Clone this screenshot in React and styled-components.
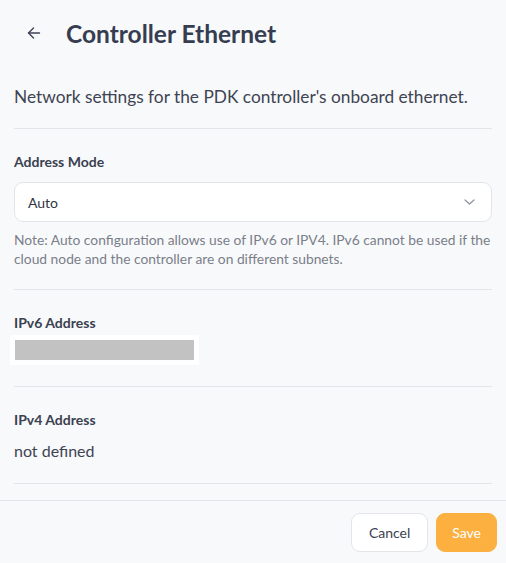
import styled, { createGlobalStyle } from 'styled-components'

const GlobalStyle = createGlobalStyle`
    html, body {
        margin: 0;
        padding: 0;
        background: #f8f9fb;
    }
    body {
        font-family: Lato, "Open Sans", sans-serif;
        color: #3a4150;
    }
`

function ArrowLeft() {
    return (
        <svg width="14" height="14" viewBox="0 0 14 14" fill="none" stroke="#3d4456" strokeWidth="1.4" strokeLinecap="round" strokeLinejoin="round">
            <path d="M12.5 7H1.5" />
            <path d="M6.5 2L1.5 7l5 5" />
        </svg>
    )
}

function Chevron() {
    return (
        <svg width="11" height="6" viewBox="0 0 11 6" fill="none" stroke="#8a909c" strokeWidth="1.2" strokeLinecap="round" strokeLinejoin="round">
            <path d="M1 1l4.5 4L10 1" />
        </svg>
    )
}

export default function App() {
    return (
        <Page>
            <GlobalStyle />
            <Body>
                <Header>
                    <BackBtn><ArrowLeft /></BackBtn>
                    <Title>Controller Ethernet</Title>
                </Header>
                <Desc>Network settings for the PDK controller's onboard ethernet.</Desc>
                <Section>
                    <Label>Address Mode</Label>
                    <Select>
                        <span>Auto</span>
                        <Chevron />
                    </Select>
                    <Note>
                        Note: Auto configuration allows use of IPv6 or IPV4. IPv6 cannot be used if the
                        cloud node and the controller are on different subnets.
                    </Note>
                </Section>
                <Section>
                    <Label>IPv6 Address</Label>
                    <Redacted><span /></Redacted>
                </Section>
                <Section>
                    <Label>IPv4 Address</Label>
                    <Value>not defined</Value>
                </Section>
            </Body>
            <Footer>
                <Button>Cancel</Button>
                <Button primary>Save</Button>
            </Footer>
        </Page>
    )
}

const Page = styled.div`
    width: 506px;
    min-height: 563px;
    display: flex;
    flex-direction: column;
    background: #f8f9fb;
`

const Body = styled.div`
    padding: 0 14px;
`

const Header = styled.div`
    display: flex;
    align-items: center;
    height: 66px;
    padding-left: 13px;
    gap: 25px;
`

const BackBtn = styled.div`
    display: flex;
    align-items: center;
    width: 14px;
    height: 14px;
`

const Title = styled.h1`
    margin: 0;
    font-size: 24.5px;
    font-weight: 700;
    color: #363d50;
`

const Desc = styled.p`
    margin: 0;
    padding: 20px 0 21px;
    font-size: 17.3px;
    line-height: 21px;
    color: #3e4452;
    border-bottom: 1px solid #e3e5e9;
`

const Section = styled.div`
    padding: 24px 0 21px;
    border-bottom: 1px solid #e3e5e9;
`

const Label = styled.div`
    font-size: 14px;
    font-weight: 700;
    line-height: 18px;
    color: #3a4150;
`

const Select = styled.div`
    margin-top: 11px;
    height: 40px;
    box-sizing: border-box;
    display: flex;
    align-items: center;
    justify-content: space-between;
    padding: 0 16px 0 13px;
    background: #fff;
    border: 1px solid #e3e5e9;
    border-radius: 9px;
    font-size: 14px;
    color: #2f3542;
`

const Note = styled.p`
    margin: 8px 0 0;
    font-size: 13.8px;
    line-height: 19px;
    color: #7a7f89;
`

const Redacted = styled.div`
    display: flex;
    width: fit-content;
    margin: 3px 0 0 -4px;
    padding: 5px;
    background: #fff;

    span {
        display: block;
        width: 179px;
        height: 20px;
        background: #c2c2c2;
    }
`

const Value = styled.div`
    margin-top: 11px;
    font-size: 16px;
    line-height: 22px;
    color: #3e4452;
`

const Footer = styled.div`
    margin-top: 16px;
    border-top: 1px solid #e3e5e9;
    display: flex;
    justify-content: flex-end;
    gap: 8px;
    padding: 12px 9px 12px;
`

const Button = styled.button`
    height: 39px;
    padding: 0 ${(props) => (props.primary ? '15px' : '17px')};
    border-radius: 9px;
    font-family: Lato, sans-serif;
    font-size: 14px;
    border: 1px solid ${(props) => (props.primary ? '#fbb040' : '#e3e5e9')};
    background: ${(props) => (props.primary ? '#fbb040' : '#fff')};
    color: ${(props) => (props.primary ? '#fff' : '#3a4150')};
`
